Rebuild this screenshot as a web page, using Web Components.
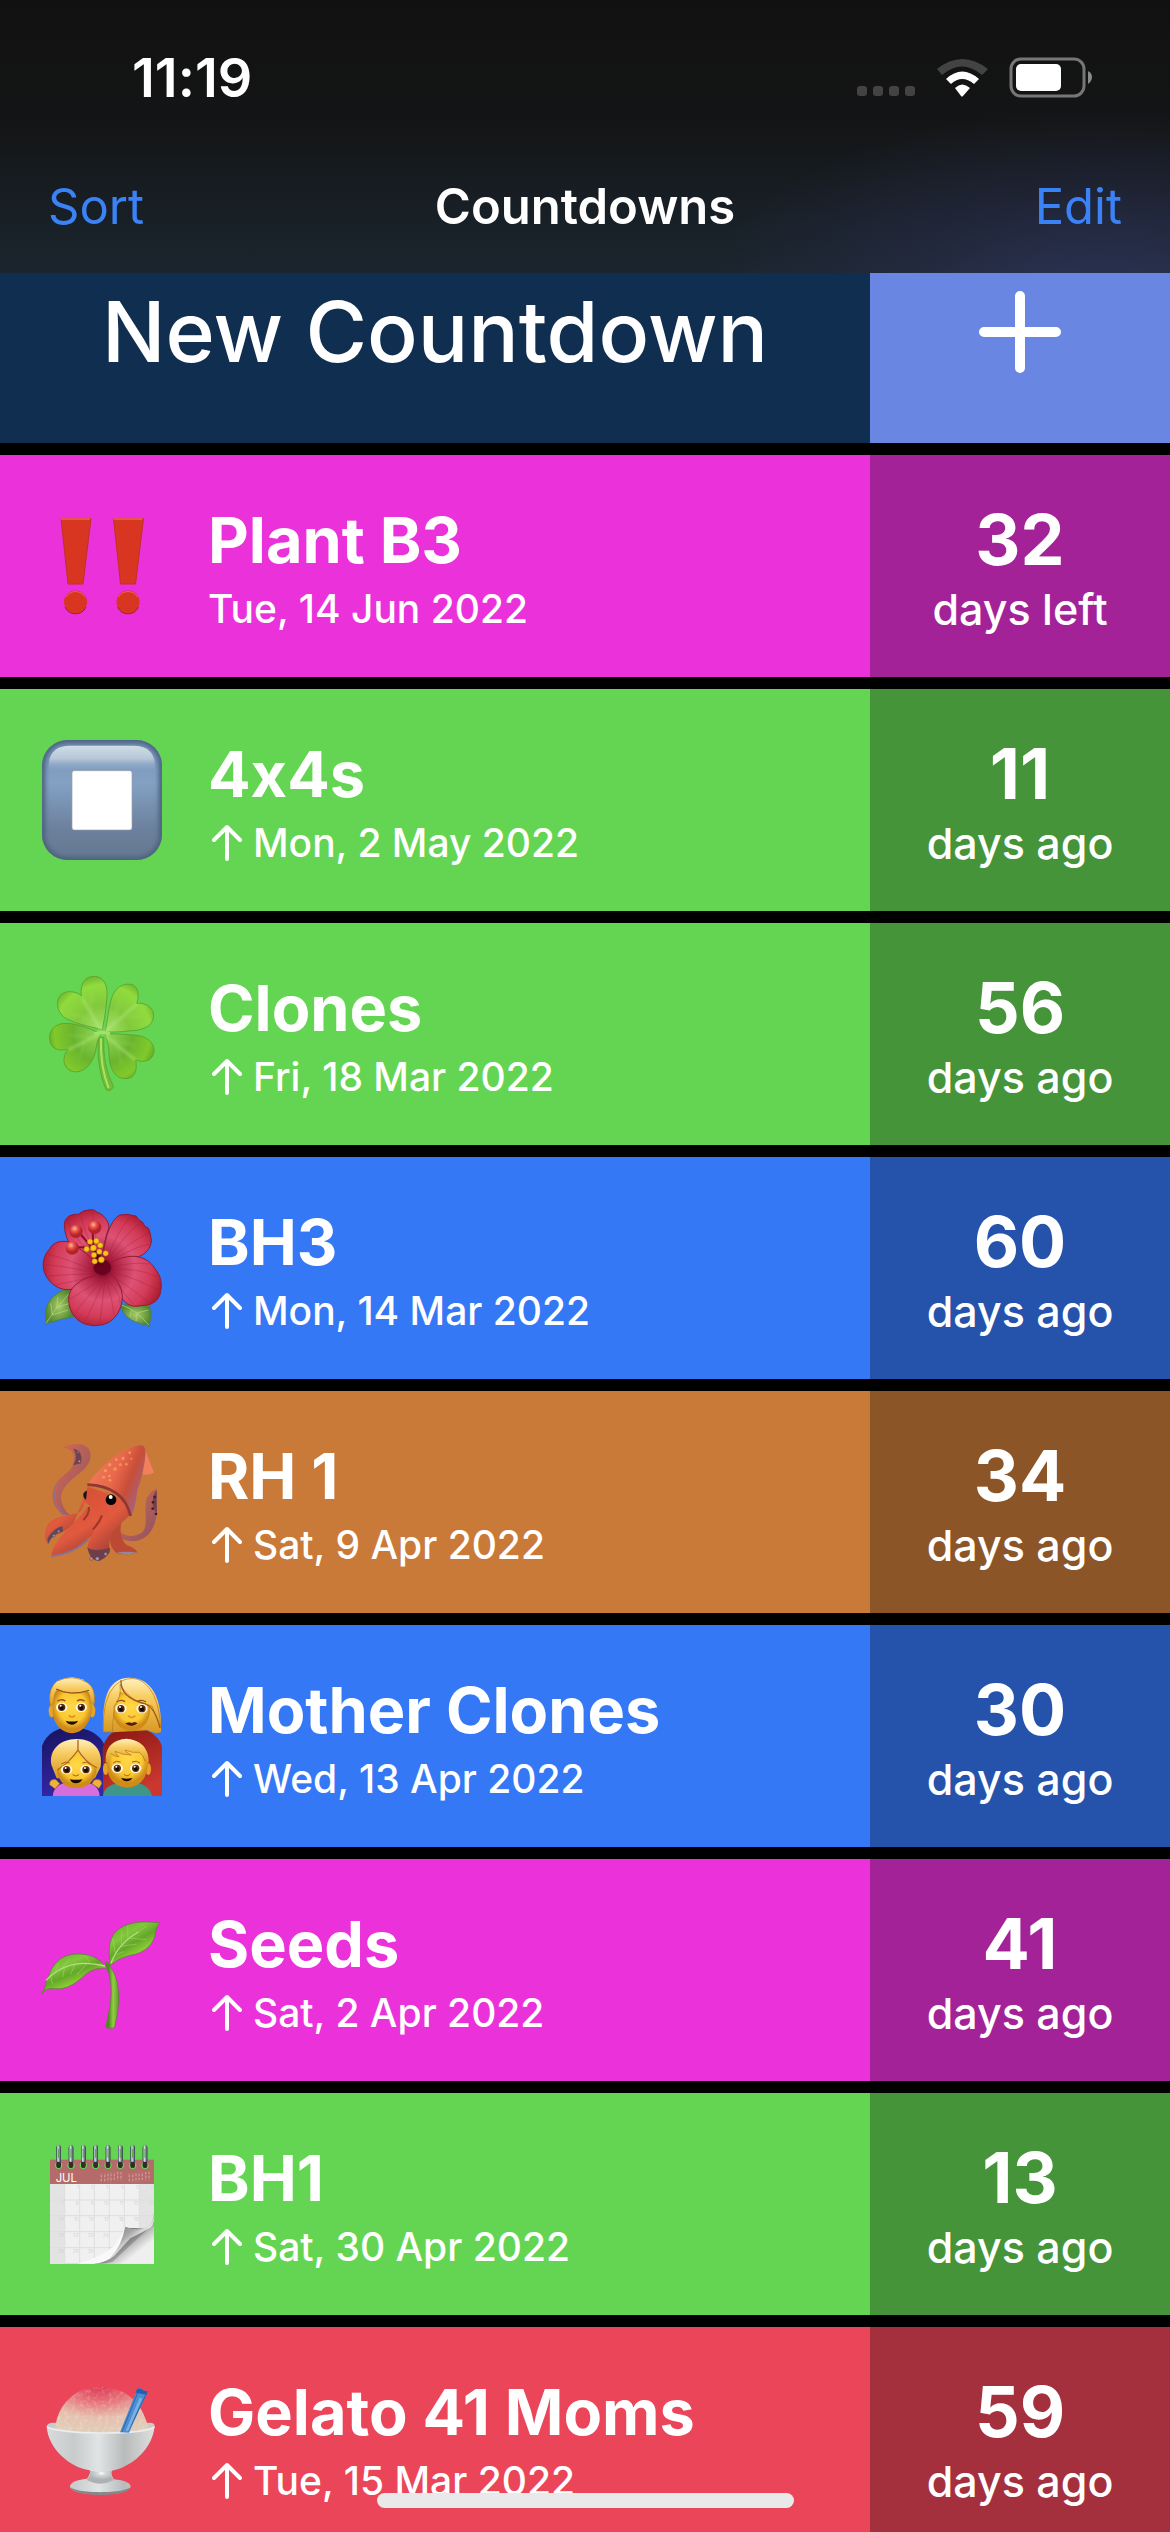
<!DOCTYPE html>
<html lang="en">
<head>
<meta charset="utf-8">
<meta name="viewport" content="width=device-width, initial-scale=1">
<title>Countdowns</title>
<style>
html, body {
	margin: 0;
	background: #000;
	color: #fff;
	font-family: Inter, "Liberation Sans", sans-serif;
	font-variant-ligatures: no-contextual;
}
</style>
</head>
<body>
<countdown-app>
	<status-bar slot="header">11:19</status-bar>
	<nav-bar slot="header">
		<span slot="left">Sort</span>
		Countdowns
		<span slot="right">Edit</span>
	</nav-bar>

	<new-countdown>New Countdown</new-countdown>
	<countdown-row color="pink" count="32" unit="days left">
		<emoji-icon slot="icon" name="bangs"></emoji-icon>Plant B3<span slot="date">Tue, 14 Jun 2022</span>
	</countdown-row>
	<countdown-row color="green" count="11" unit="days ago" past>
		<emoji-icon slot="icon" name="stop"></emoji-icon>4x4s<span slot="date">Mon, 2 May 2022</span>
	</countdown-row>
	<countdown-row color="green" count="56" unit="days ago" past>
		<emoji-icon slot="icon" name="clover"></emoji-icon>Clones<span slot="date">Fri, 18 Mar 2022</span>
	</countdown-row>
	<countdown-row color="blue" count="60" unit="days ago" past>
		<emoji-icon slot="icon" name="hibiscus"></emoji-icon>BH3<span slot="date">Mon, 14 Mar 2022</span>
	</countdown-row>
	<countdown-row color="brown" count="34" unit="days ago" past>
		<emoji-icon slot="icon" name="squid"></emoji-icon>RH 1<span slot="date">Sat, 9 Apr 2022</span>
	</countdown-row>
	<countdown-row color="blue" count="30" unit="days ago" past>
		<emoji-icon slot="icon" name="family"></emoji-icon>Mother Clones<span slot="date">Wed, 13 Apr 2022</span>
	</countdown-row>
	<countdown-row color="pink" count="41" unit="days ago" past>
		<emoji-icon slot="icon" name="seedling"></emoji-icon>Seeds<span slot="date">Sat, 2 Apr 2022</span>
	</countdown-row>
	<countdown-row color="green" count="13" unit="days ago" past>
		<emoji-icon slot="icon" name="calendar"></emoji-icon>BH1<span slot="date">Sat, 30 Apr 2022</span>
	</countdown-row>
	<countdown-row color="red" count="59" unit="days ago" past>
		<emoji-icon slot="icon" name="ice"></emoji-icon>Gelato 41 Moms<span slot="date">Tue, 15 Mar 2022</span>
	</countdown-row>
</countdown-app>

<script>
function makeTemplate(html) {
	const template = document.createElement('template');
	template.innerHTML = html;
	return template;
}

// Base class: clones the template of the subclass into its shadow root
class BaseElement extends HTMLElement {
	connectedCallback() {
		if (this.shadowRoot) {
			return;
		}
		this.attachShadow({ mode: 'open' });
		this.shadowRoot.appendChild(this.constructor.template.content.cloneNode(true));
		this.render();
	}

	render() {}
}

class CountdownApp extends BaseElement {}
CountdownApp.template = makeTemplate(`
<style>
:host {
	display: flex;
	flex-direction: column;
	height: 100vh;
	overflow: hidden;
}
header {
	flex: none;
	background:
		radial-gradient(ellipse 34% 70% at 94% 110%, rgba(54, 60, 112, .6), rgba(46, 48, 86, .35) 55%, transparent),
		linear-gradient(#111 0%, #141516 45%, #182027 80%, #1b252d 100%);
}
main {
	flex: 1;
	min-height: 0;
	overflow: hidden;
	display: flex;
	flex-direction: column;
	gap: 12px;
}
.home {
	position: fixed;
	bottom: 24px;
	left: 50%;
	width: 417px;
	height: 15px;
	margin-left: -208px;
	border-radius: 8px;
	background: #e9e9e9;
}
</style>
<header><slot name="header"></slot></header>
<main><slot></slot></main>
<div class="home"></div>
`);

class StatusBar extends BaseElement {}
StatusBar.template = makeTemplate(`
<style>
:host {
	display: flex;
	align-items: center;
	justify-content: space-between;
	box-sizing: border-box;
	height: 141px;
	padding: 30px 76px 15px 132px;
	font-size: 54px;
	font-weight: 600;
	line-height: 96px;
}
svg { display: block; }
</style>
<slot></slot>
<svg width="240" height="44" viewBox="853 56 240 44" aria-hidden="true">
	<g fill="#434344">
		<rect x="856" y="86" width="10" height="10" rx="3"/>
		<rect x="872" y="86" width="10" height="10" rx="3"/>
		<rect x="888" y="86" width="10" height="10" rx="3"/>
		<rect x="904" y="86" width="10" height="10" rx="3"/>
	</g>
	<path d="M936 69Q961 49 987 69L981 75Q961 58 941 75Z" fill="#434344"/>
	<path d="M945 79Q961 64 978 79L973 84Q961 74 950 84Z" fill="#fff"/>
	<path d="M954 88Q961 81 969 88L962 96Q961 97 960 96Z" fill="#fff"/>
	<rect x="1010" y="59" width="73" height="37" rx="10" fill="none" stroke="#767677" stroke-width="3"/>
	<rect x="1015" y="64" width="45" height="27" rx="5" fill="#fff"/>
	<path d="M1087 71Q1091 73 1091 77T1087 84Z" fill="#8a8a8b"/>
</svg>
`);

class NavBar extends BaseElement {}
NavBar.template = makeTemplate(`
<style>
:host {
	display: grid;
	grid-template-columns: 1fr auto 1fr;
	align-items: center;
	height: 132px;
	padding: 0 48px;
	font-size: 49px;
	line-height: 60px;
}
button {
	margin: 0;
	padding: 0;
	border: 0;
	background: none;
	color: #3b82f7;
	font: inherit;
	text-align: left;
}
.right { text-align: right; }
h1 {
	margin: 0;
	font-size: inherit;
	font-weight: 600;
}
</style>
<button type="button"><slot name="left"></slot></button>
<h1><slot></slot></h1>
<button type="button" class="right"><slot name="right"></slot></button>
`);

class NewCountdown extends BaseElement {}
NewCountdown.template = makeTemplate(`
<style>
:host { display: block; flex: none; }
button {
	display: flex;
	width: 100%;
	height: 170px;
	margin: 0;
	padding: 0;
	border: 0;
	background: #102e50;
	color: inherit;
	font: 500 84px/118px Inter, "Liberation Sans", sans-serif;
}
.label { flex: 1; }
.plus {
	display: flex;
	justify-content: center;
	width: 300px;
	height: 100%;
	padding-top: 17px;
	box-sizing: border-box;
	background: #6987e2;
}
</style>
<button type="button">
	<span class="label"><slot></slot></span>
	<span class="plus">
		<svg width="84" height="84" viewBox="0 0 84 84" stroke="#fff" stroke-width="10" stroke-linecap="round" aria-hidden="true">
			<path d="M42 6V78M6 42H78"/>
		</svg>
	</span>
</button>
`);

class CountdownRow extends BaseElement {
	render() {
		this.shadowRoot.querySelector('.count').textContent = this.getAttribute('count');
		this.shadowRoot.querySelector('.unit').textContent = this.getAttribute('unit');
	}
}
CountdownRow.template = makeTemplate(`
<style>
:host {
	display: flex;
	flex: none;
	height: 222px;
	background: var(--row);
	white-space: nowrap;
}
:host([color="pink"]) { --row: #eb31da; }
:host([color="green"]) { --row: #64d552; }
:host([color="blue"]) { --row: #3578f6; }
:host([color="brown"]) { --row: #c97a39; }
:host([color="red"]) { --row: #eb455a; }
.icon {
	display: flex;
	align-items: center;
	padding: 0 46px 0 42px;
}
.info, .left {
	padding-top: 46px;
	box-sizing: border-box;
}
.info { flex: 1; }
.left {
	width: 300px;
	background: rgba(0, 0, 0, .3);
	text-align: center;
}
h2, .count {
	margin: 0;
	font-size: 63px;
	font-weight: 700;
	line-height: 78px;
}
.count { font-size: 70px; }
.date, .unit {
	display: flex;
	align-items: center;
	gap: 11px;
	font-size: 39px;
	font-weight: 500;
	line-height: 60px;
}
.unit {
	justify-content: center;
	font-size: 43px;
}
.date svg { display: none; margin-left: 4px; }
:host([past]) .date svg { display: block; }
</style>
<div class="icon"><slot name="icon"></slot></div>
<div class="info">
	<h2><slot></slot></h2>
	<div class="date">
		<svg width="30" height="38" viewBox="0 0 30 38" fill="none" stroke="#fff" stroke-width="4" stroke-linecap="round" stroke-linejoin="round" aria-hidden="true">
			<path d="M15 35V3M2 16L15 3L28 16"/>
		</svg>
		<slot name="date"></slot>
	</div>
</div>
<div class="left">
	<div class="count"></div>
	<div class="unit"></div>
</div>
`);

const icons = {};

icons.bangs = `
<svg viewBox="42 506 120 120">
	<g id="b">
		<path d="M61 518.500H91L83 584H68Z" fill="#d93622" stroke="#c02f2a" stroke-width="1"/>
		<path d="M61 519H90" stroke="#f0605a" stroke-width="1.500"/>
		<circle cx="75.500" cy="602" r="11.500" fill="#d93622"/>
		<path d="M65 607A11.500 11.500 0 0 0 86 607" stroke="#a02320" fill="none"/>
		<path d="M66 597A11 11 0 0 1 85 597" stroke="#f0605a" fill="none"/>
	</g>
	<use href="#b" x="52.500"/>
</svg>`;

icons.stop = `
<svg viewBox="66 90 360 360">
	<defs>
		<linearGradient id="g" x2="0" y2="1"><stop stop-color="#7391b5"/><stop offset=".35" stop-color="#84a1c4"/><stop offset=".75" stop-color="#6b809c"/><stop offset="1" stop-color="#667890"/></linearGradient>
		<linearGradient id="s" x2="0" y2="1"><stop stop-color="#d0dde8"/><stop offset=".5" stop-color="#b7c7d8"/><stop offset="1" stop-color="#84a1c4" stop-opacity="0"/></linearGradient>
		<filter id="f"><feGaussianBlur stdDeviation="6"/></filter>
		<clipPath id="c"><rect x="66" y="90" width="360" height="360" rx="76"/></clipPath>
	</defs>
	<g clip-path="url(#c)">
		<rect x="66" y="90" width="360" height="360" fill="url(#g)"/>
		<rect x="66" y="90" width="360" height="360" rx="76" fill="none" stroke="#4b637f" stroke-width="20" filter="url(#f)"/>
	</g>
	<path d="M86 185V170Q86 107 150 107H340Q405 107 405 170V185Z" fill="url(#s)"/>
	<rect x="156" y="182" width="180" height="178" rx="7" fill="#fff" stroke="#9a9fa8" stroke-width="2"/>
</svg>`;

icons.clover = `
<svg viewBox="66 72 360 360">
	<defs>
		<radialGradient id="a" gradientUnits="userSpaceOnUse" cx="248" cy="248" r="180"><stop stop-color="#a9e56e"/><stop offset=".45" stop-color="#82c93c"/><stop offset=".8" stop-color="#90dc3e"/><stop offset="1" stop-color="#64ab26"/></radialGradient>
		<radialGradient id="b" gradientUnits="userSpaceOnUse" cx="248" cy="248" r="180"><stop stop-color="#98dd5c"/><stop offset=".5" stop-color="#6ab42e"/><stop offset=".8" stop-color="#80ca2b"/><stop offset="1" stop-color="#53981d"/></radialGradient>
		<filter id="f"><feGaussianBlur stdDeviation="4"/></filter>
	</defs>
	<path d="M235 262C231 320 239 379 259 420Q270 427 281 410C257 362 249 315 252 262Z" fill="#71bd38" stroke="#559a2e" stroke-width="2"/>
	<path d="M243 265C241 325 250 375 266 414" stroke="#a6e564" stroke-width="6" fill="none"/>
	<g stroke="#5e9e32" stroke-width="2.500">
		<path d="M244 238C226 234 170 222 150 211C112 199 103 153 122 135C139 119 169 124 184 137C180 101 195 78 224 79C256 81 265 112 260 151C257 190 251 216 247 241Z" fill="url(#a)"/>
		<path d="M256 243C263 217 264 172 277 138C288 109 319 95 341 106C357 116 357 142 350 160C378 157 401 172 401 198C399 233 360 242 325 243C300 247 277 245 256 247Z" fill="url(#a)"/>
		<path d="M236 248C202 233 167 219 135 220C98 222 84 247 90 275C98 303 124 302 144 298C126 319 127 352 153 363C187 375 219 342 226 305C231 285 231 267 242 255Z" fill="url(#b)"/>
		<path d="M255 252C284 251 324 253 350 256C387 260 408 286 401 310C395 335 368 338 347 330C353 361 344 387 316 386C285 386 267 354 267 315C267 292 263 271 255 256Z" fill="url(#b)"/>
	</g>
	<g stroke="#b9ec85" fill="none" filter="url(#f)" stroke-width="5" opacity=".75">
		<path d="M246 246L187 145M252 247L352 161M240 252L144 300M255 256L346 330"/>
		<path d="M228 215L150 190M214 188V130M277 222L300 150M300 203L365 200M215 263L145 255M195 273L180 320M274 272L345 285M290 284L305 345" stroke-width="4" opacity=".4"/>
	</g>
	<path d="M224 252Q244 243 270 252" stroke="#a4e264" stroke-width="10" fill="none"/>
</svg>`;

icons.hibiscus = `
<svg viewBox="66 54 360 360">
	<defs>
		<radialGradient id="p" gradientUnits="userSpaceOnUse" cx="248" cy="235" r="195"><stop stop-color="#500015"/><stop offset=".18" stop-color="#a91c3c"/><stop offset=".5" stop-color="#dd5275"/><stop offset=".75" stop-color="#d33b58"/><stop offset=".95" stop-color="#ad1d30"/></radialGradient>
		<radialGradient id="l"><stop stop-color="#a5cc68"/><stop offset="1" stop-color="#54882f"/></radialGradient>
		<radialGradient id="r" cx=".4" cy=".3"><stop stop-color="#ffb4a0"/><stop offset=".5" stop-color="#e75043"/><stop offset="1" stop-color="#b4232b"/></radialGradient>
	</defs>
	<g fill="url(#l)" stroke="#4b7a2c" stroke-width="2">
		<path d="M150 295C115 302 84 324 78 360C75 378 80 388 76 404Q86 393 98 397Q120 386 158 382Z"/>
		<path d="M302 345C305 372 330 392 352 397Q366 407 376 402L388 410Q386 397 393 388Q394 362 387 340Z"/>
	</g>
	<path d="M78 400Q105 355 148 310M97 373L92 340M110 355L113 322M96 375L145 360M113 352L149 340M305 345Q350 360 386 405M335 360L330 380M351 370L348 394M351 369L385 360" stroke="#bad984" stroke-width="2" fill="none"/>
	<g fill="url(#p)" stroke="#8f1c36" stroke-width="3">
		<path d="M225 225C180 210 134 166 133 102C135 80 155 71 175 73Q188 60 209 59Q223 57 232 67C252 74 266 93 267 112Q250 155 246 220Z"/>
		<path d="M248 225C248 160 270 88 300 75Q321 70 348 78Q356 92 368 97Q371 110 386 115Q392 132 394 150C395 177 370 201 338 204Q285 210 260 230Z"/>
		<path d="M235 236C221 199 177 177 148 156C122 150 98 157 89 177C76 190 67 211 70 234C75 269 108 300 144 299C191 294 225 276 238 245Z"/>
		<path d="M260 235C274 207 317 198 345 199C382 203 397 224 406 237C421 256 427 276 422 305C417 335 392 347 363 347C333 355 309 339 299 310Q290 285 265 255Z"/>
		<path d="M250 250C213 257 157 274 147 316C141 356 163 391 197 403Q222 411 248 404C292 393 311 345 306 310C300 276 278 253 268 248Z"/>
	</g>
	<g stroke="#9e1938" stroke-width="2" opacity=".5" fill="none">
		<path d="M225 243Q150 210 83 192M225 248Q140 230 78 224M225 252Q150 252 84 258M226 256Q165 275 105 285M240 270Q180 310 151 326M245 272Q195 330 165 370M250 274Q217 350 196 394M254 274Q248 340 239 398M260 272Q277 330 283 376M264 270Q300 305 301 340"/>
		<path d="M275 234Q330 214 388 222M276 240Q345 230 411 260M276 247Q350 264 416 302M275 255Q340 300 389 339M272 258Q325 325 341 344M261 205Q295 120 330 82M265 208Q315 132 360 100M269 211Q330 155 386 129M273 214Q335 174 388 162M226 205Q170 155 144 96M232 201Q195 130 182 80M236 198Q223 120 218 67"/>
	</g>
	<ellipse cx="247" cy="232" rx="26" ry="23" fill="#69021e"/>
	<path d="M240 226L220 166L218 125M226 185L181 132M223 174L165 171" stroke="#8a0c26" stroke-width="6" fill="none"/>
	<path d="M240 228L228 182" stroke="#650016" stroke-width="20"/>
	<g fill="url(#r)"><circle cx="168" cy="124" r="20"/><circle cx="224" cy="112" r="20"/><circle cx="157" cy="174" r="20"/></g>
	<g fill="#f7c916" stroke="#b37c0c" stroke-width="1.500">
		<circle cx="210" cy="155" r="8"/><circle cx="229" cy="153" r="8"/><circle cx="241" cy="166" r="8"/><circle cx="200" cy="177" r="8"/><circle cx="220" cy="174" r="9"/><circle cx="238" cy="185" r="8"/><circle cx="257" cy="190" r="8"/><circle cx="222" cy="195" r="8"/><circle cx="224" cy="214" r="8"/><circle cx="244" cy="209" r="9"/>
	</g>
</svg>`;

icons.squid = `
<svg viewBox="66 66 360 360">
	<defs>
		<linearGradient id="m" x1="0" y1="0" x2="1" y2=".5"><stop stop-color="#f38260"/><stop offset=".55" stop-color="#e8674b"/><stop offset=".78" stop-color="#c84e38"/><stop offset="1" stop-color="#a8617a"/></linearGradient>
		<linearGradient id="h" x2=".6" y2="1"><stop stop-color="#d74f34"/><stop offset=".6" stop-color="#e1593e"/><stop offset="1" stop-color="#a13f37"/></linearGradient>
		<linearGradient id="t" x2="1" y2="1"><stop stop-color="#d76b51"/><stop offset="1" stop-color="#8e5362"/></linearGradient>
	</defs>
	<path d="M126 83Q160 69 184 73C218 82 222 120 190 150C158 177 116 204 125 245Q131 270 150 286L128 284C91 253 89 216 113 183C137 158 169 147 161 105Q156 84 126 83Z" fill="url(#t)"/>
	<path d="M160 86Q190 91 183 130L159 136Q176 110 160 86Z" fill="#714352"/>
	<path d="M116 188Q94 218 108 250T140 285" fill="none" stroke="#8d7697" stroke-width="3"/>
	<path d="M298 335Q332 358 362 340C391 325 367 256 382 231Q394 212 410 206L411 270C409 310 395 351 352 362Q318 368 288 349Z" fill="url(#t)"/>
	<path d="M410 210Q395 229 399 257L410 285Z" fill="#70404e"/>
	<g fill="#3d2023"><circle cx="404" cy="231" r="4"/><circle cx="399" cy="247" r="4"/><circle cx="398" cy="266" r="4"/><circle cx="408" cy="282" r="4"/></g>
	<path d="M272 310L308 290Q291 351 320 376Q345 383 352 397Q326 407 291 400C260 375 274 350 270 324Z" fill="#bb4934"/>
	<path d="M290 396Q315 394 350 396L329 403Q308 405 290 396Z" fill="#9188a4"/>
	<path d="M204 198C198 230 197 263 178 277C145 290 88 285 77 329Q71 356 84 372Q90 353 109 344Q140 335 162 308Z" fill="url(#h)"/>
	<path d="M84 372Q97 342 129 334L127 318Q98 326 83 355Z" fill="#5e485a"/>
	<path d="M202 260C174 309 96 356 94 409C139 406 173 390 207 354Q245 326 250 286Z" fill="url(#h)"/>
	<path d="M94 409Q170 397 205 356" stroke="#8a708f" stroke-width="6" fill="none"/>
	<path d="M230 281C239 326 200 355 203 387Q220 405 269 389Q262 346 292 320L329 286Q327 253 291 230L203 200L193 242Z" fill="url(#h)"/>
	<path d="M202 382Q217 397 270 384Q273 406 238 423Q210 424 202 382Z" fill="#6f3e4c"/>
	<g fill="#aa90a5" stroke="#302329" stroke-width="1"><circle cx="214" cy="416" r="5"/><circle cx="232" cy="416" r="6"/><circle cx="257" cy="402" r="5"/><circle cx="116" cy="334" r="4"/><circle cx="102" cy="347" r="4"/><circle cx="174" cy="97" r="3"/><circle cx="178" cy="124" r="4"/></g>
	<path d="M256 135Q268 112 299 101L328 92L287 117Z" fill="#e66a4f"/>
	<path d="M376 90Q391 130 402 158Q383 167 367 163Z" fill="#f2805f"/>
	<path d="M202 194Q221 164 257 132Q310 84 360 75Q376 75 377 97Q372 160 352 210Q346 270 332 290Q323 246 273 215Q242 197 202 199Z" fill="url(#m)"/>
	<path d="M202 194Q310 198 332 288" fill="none" stroke="#903633" stroke-width="8"/>
	<g fill="#f9a563" opacity=".75"><circle cx="256" cy="152" r="5"/><circle cx="269" cy="134" r="5"/><circle cx="289" cy="119" r="4"/><circle cx="309" cy="115" r="5"/><circle cx="329" cy="98" r="4"/><circle cx="285" cy="147" r="5"/><circle cx="268" cy="168" r="4"/><circle cx="301" cy="134" r="4"/><circle cx="251" cy="172" r="4"/><circle cx="319" cy="133" r="4"/><circle cx="270" cy="181" r="4"/><circle cx="334" cy="116" r="3"/></g>
	<path d="M246 286Q239 307 219 328M190 300Q208 283 207 261" stroke="#9e3528" stroke-width="6" fill="none"/>
	<path d="M201 212Q188 216 190 228Q191 237 198 239Z" fill="#10191d"/>
	<circle cx="273" cy="239" r="16" fill="#020303"/><circle cx="272" cy="231" r="6" fill="#fff"/>
</svg>`;

icons.family = `
<svg viewBox="66 48 360 360">
	<defs>
		<radialGradient id="s" cy=".4"><stop stop-color="#ffd84a"/><stop offset=".7" stop-color="#fac832"/><stop offset="1" stop-color="#cf8a18"/></radialGradient>
		<linearGradient id="h" x2="0" y2="1"><stop stop-color="#fff0c0"/><stop offset=".35" stop-color="#f8cd62"/><stop offset="1" stop-color="#d79821"/></linearGradient>
		<linearGradient id="bl" x2=".3" y2="1"><stop stop-color="#18135d"/><stop offset="1" stop-color="#3327aa"/></linearGradient>
		<linearGradient id="rd" x2=".4" y2="1"><stop stop-color="#84160f"/><stop offset="1" stop-color="#c93730"/></linearGradient>
		<g id="eye"><ellipse rx="17" ry="14" fill="#fffbe2"/><circle r="11" fill="#5a2c0c"/><circle cy="2" r="6" fill="#160905"/><circle cx="-3" cy="-5" r="3" fill="#fff"/></g>
	</defs>
	<path d="M66 408V257C81 218 116 201 156 202C205 204 253 224 260 280V408Z" fill="url(#bl)"/>
	<path d="M248 265C259 219 294 201 337 202C385 204 421 231 426 263V408H250Z" fill="url(#rd)"/>
	<path d="M90 130Q88 56 155 52Q223 56 223 128L218 145L93 143Z" fill="url(#h)"/>
	<ellipse cx="95" cy="153" rx="9" ry="19" fill="#e5a429"/><ellipse cx="217" cy="153" rx="9" ry="19" fill="#e5a429"/>
	<path d="M98 115Q104 93 116 88Q155 105 204 94Q216 102 215 157C207 196 184 219 156 220C126 219 101 194 98 157Z" fill="url(#s)"/>
	<path d="M89 121Q87 85 110 64Q158 41 202 68Q229 85 222 134L211 124Q211 106 203 94Q151 109 113 88Q101 99 101 127L92 139Z" fill="url(#h)" stroke="#bd7c1b" stroke-width="2"/>
	<path d="M108 87Q152 109 207 91" fill="none" stroke="#8c4c15" stroke-width="3"/>
	<path d="M249 215C249 151 248 63 318 54C387 47 429 105 423 216Q406 224 383 211L277 217Z" fill="url(#h)"/>
	<path d="M277 150Q283 108 298 95Q345 105 380 127Q395 144 389 164C382 193 361 213 334 214C301 211 280 188 277 150Z" fill="url(#s)"/>
	<path d="M286 75Q319 48 354 58Q415 83 422 202Q407 170 396 138Q330 126 300 74Q305 110 283 138Q280 170 277 216H250Q246 115 286 75Z" fill="url(#h)" stroke="#b67516" stroke-width="2"/>
	<path d="M303 61Q300 114 377 132Q405 143 420 204" fill="none" stroke="#a25c14" stroke-width="4"/>
	<use href="#eye" x="125" y="142"/><use href="#eye" x="184" y="142"/><use href="#eye" x="303" y="146"/><use href="#eye" x="366" y="146"/>
	<path d="M112 124Q124 115 136 123M171 123Q184 115 194 124M290 126Q302 117 315 125M352 125Q365 117 378 126" stroke="#91521a" stroke-width="4" fill="none"/>
	<path d="M146 166Q156 176 166 166M324 167Q335 178 346 167" fill="none" stroke="#dc962b" stroke-width="5"/>
	<path d="M137 182Q155 187 174 182Q169 193 155 194Q142 192 137 182Z" fill="#230d08"/><path d="M315 190L328 187L335 189L344 186L353 190Q334 206 315 190Z" fill="#542013"/>
	<path d="M98 408Q102 373 145 367H197Q237 374 239 408Z" fill="#d66edd"/>
	<path d="M249 408Q252 377 295 369H353Q388 377 397 408Z" fill="#3e9688"/>
	<path d="M108 359Q88 356 89 374L105 386L119 371ZM223 360Q244 355 245 371L237 385L216 371Z" fill="#efb23f" stroke="#b57116" stroke-width="2"/>
	<path d="M94 314C87 271 119 237 170 237C219 236 250 270 242 320L225 355H110Z" fill="url(#h)"/>
	<path d="M110 329Q147 304 171 272Q189 300 229 326Q229 356 203 376Q171 393 137 377Q113 360 110 329Z" fill="url(#s)"/>
	<path d="M174 239V270Q150 306 112 330M174 270Q195 306 231 324" fill="none" stroke="#aa681c" stroke-width="4"/>
	<ellipse cx="257" cy="327" rx="8" ry="18" fill="#e5a429"/><ellipse cx="385" cy="327" rx="8" ry="18" fill="#e5a429"/>
	<path d="M260 309Q253 244 318 237Q383 242 386 302L378 342Q365 380 322 383Q278 380 265 342Z" fill="url(#s)"/>
	<path d="M257 307Q253 242 319 236Q385 242 386 307L375 305Q369 280 358 277Q337 280 314 268Q323 282 334 285Q307 283 284 274Q293 287 297 291Q279 287 272 279L266 309Z" fill="url(#h)"/>
	<path d="M272 279Q278 288 297 290Q288 282 285 274Q309 286 334 285Q318 279 315 270Q339 280 358 277Q371 286 375 304" fill="none" stroke="#b46c19" stroke-width="2"/>
	<use href="#eye" x="140" y="329"/><use href="#eye" x="198" y="329"/><use href="#eye" x="292" y="325"/><use href="#eye" x="347" y="325"/>
	<path d="M124 312Q136 302 149 309M187 309Q201 302 211 313M279 309Q289 300 302 306M336 306Q350 300 360 309M158 344Q167 352 177 344M311 342Q321 353 331 342" stroke="#a96016" stroke-width="3" fill="none"/>
	<path d="M150 358Q167 361 187 358Q182 370 167 370Q154 370 150 358ZM304 354Q320 358 337 354Q333 363 320 364Q307 363 304 354Z" fill="#170906"/>
</svg>`;

icons.seedling = `
<svg viewBox="66 30 360 360">
	<defs>
		<linearGradient id="a" x2=".7" y2="1"><stop stop-color="#68a42c"/><stop offset=".35" stop-color="#82c83d"/><stop offset=".55" stop-color="#65a729"/><stop offset=".75" stop-color="#8ed235"/><stop offset="1" stop-color="#4b8823"/></linearGradient>
		<linearGradient id="b"><stop stop-color="#5e9728"/><stop offset=".25" stop-color="#4e8724"/><stop offset=".6" stop-color="#91cf3e"/><stop offset="1" stop-color="#5f9a2d"/></linearGradient>
	</defs>
	<path d="M255 187Q261 180 266 193C309 248 298 327 283 383Q270 389 257 381C268 333 285 268 262 207Z" fill="url(#b)" stroke="#4e822a" stroke-width="2"/>
	<g fill="url(#a)" stroke="#4a852b" stroke-width="2">
		<path d="M66 280C77 268 75 249 84 233C98 189 123 169 153 164C191 157 230 167 252 195L262 205C227 201 206 214 188 231C164 252 138 269 107 266Q78 262 66 280Z"/>
		<path d="M271 197C265 158 265 119 287 95C318 65 364 62 421 69Q408 81 407 94C403 132 378 154 344 163C316 169 291 177 271 197Z"/>
	</g>
	<path d="M78 241Q145 170 255 198M273 190Q295 130 355 96" fill="none" stroke="#b7df83" stroke-width="4"/>
	<path d="M105 218L115 190M127 204L148 177M91 226L98 253M134 201L128 232M165 192L152 223M205 187L170 225M210 186L197 170M287 164L278 117M304 137L305 91M324 118L323 79M304 139L350 132M330 114L378 119M345 102L379 79M290 164L310 155" fill="none" stroke="#a6db66" stroke-width="2" opacity=".8"/>
</svg>`;

icons.calendar = `
<svg viewBox="66 72 360 360">
	<defs>
		<linearGradient id="c" x1="0" y1="0" x2="1" y2="1"><stop offset=".3" stop-color="#777"/><stop offset=".5" stop-color="#aaa"/><stop offset=".65" stop-color="#fff"/></linearGradient>
		<linearGradient id="m"><stop stop-color="#374657"/><stop offset=".35" stop-color="#dce7ef"/><stop offset=".65" stop-color="#8a949e"/><stop offset="1" stop-color="#2c3641"/></linearGradient>
		<linearGradient id="k" x1="0" y1="0" x2="1" y2="1"><stop offset=".2" stop-color="#f2f2f2"/><stop offset=".48" stop-color="#646464"/><stop offset=".62" stop-color="#c2c2c2"/><stop offset=".75" stop-color="#efefef"/></linearGradient>
	</defs>
	<path d="M90 118H402V431H90Z" fill="#f0f0f0"/>
	<path d="M90 192H134V431H90ZM358 192H402V330H358Z" fill="#e3e3e3"/>
	<path d="M90 118H402V192H90Z" fill="#b56b69"/>
	<path d="M90 240H402M90 287H402M90 335H402M90 383H402M134 193V431M179 193V431M223 193V431M268 193V431M313 193V431M358 193V431" stroke="#dedede" stroke-width="3"/>
	<text x="107" y="186" fill="#fff" font-size="34" font-family="Inter, sans-serif">JUL</text>
	<g id="days" fill="#d4d4d4" font-size="14" font-family="Inter, sans-serif" text-anchor="end"></g>
	<path d="M244 161V186M254 161V186M264 158V186M273 158V186M283 158V180M293 156V181M303 156V181M328 161V186M338 161V186M348 158V186M357 158V186M367 158V181M377 156V181M387 156V181" stroke="#d6a6a5" stroke-width="4" stroke-dasharray="2 2"/>
	<path d="M220 431H402V290Q400 318 380 326L318 323Q310 350 297 386Q282 418 220 431Z" fill="url(#k)"/>
	<path d="M402 310L278 425Q252 432 224 429Q277 416 297 384Q314 354 316 322Q349 336 379 325Q402 311 402 282Z" fill="#777" opacity=".5"/>
	<path d="M222 429Q260 411 285 382Q307 351 316 320Q345 332 374 325Q402 310 402 278Q407 308 391 323Q365 337 331 355L283 407Q260 428 222 429Z" fill="url(#c)"/>
	<path d="M172 431Q247 409 280 380Q307 349 316 315Q307 377 270 414Q251 430 220 431Z" fill="#f9f9f9"/>
	<g id="rings"></g>
</svg>`;

icons.ice = `
<svg viewBox="66 54 360 360">
	<defs>
		<radialGradient id="i" cx=".48" cy="0" r="1"><stop stop-color="#dc3654"/><stop offset=".3" stop-color="#e66f78"/><stop offset=".62" stop-color="#e6bfae"/><stop offset="1" stop-color="#dfd0bb"/></radialGradient>
		<linearGradient id="w"><stop stop-color="#d9dcdc"/><stop offset=".25" stop-color="#c8cbcb"/><stop offset=".48" stop-color="#e1e4e4"/><stop offset=".72" stop-color="#b8bbbb"/><stop offset="1" stop-color="#dfdfdf"/></linearGradient>
		<radialGradient id="b" cx=".55" cy=".2"><stop stop-color="#fff"/><stop offset=".3" stop-color="#d7d9d9"/><stop offset="1" stop-color="#aeb1b1"/></radialGradient>
		<filter id="n" x="0" y="0" width="1" height="1"><feTurbulence type="fractalNoise" baseFrequency=".09" numOctaves="3" seed="4"/><feColorMatrix values="0 0 0 0 1  0 0 0 0 .95  0 0 0 0 .88  0 0 0 1.800 -.8"/></filter>
		<clipPath id="c"><path d="M103 220Q110 127 184 91Q250 68 313 98Q373 132 388 220Z"/></clipPath>
	</defs>
	<path d="M80 199Q83 187 101 188H388Q404 188 404 198L391 225H95Z" fill="#c9cbcb"/>
	<g clip-path="url(#c)"><path d="M98 78H393V230H98Z" fill="url(#i)"/><path d="M98 78H393V230H98Z" filter="url(#n)" opacity=".35"/></g>
	<path d="M80 199C120 226 364 228 404 198C398 267 335 321 276 332Q270 337 281 358Q331 363 332 380C326 410 154 411 150 380Q150 361 201 356Q214 338 209 331C151 323 84 267 80 199Z" fill="url(#w)"/>
	<path d="M209 332Q243 340 276 332Q270 344 281 361Q262 371 241 371Q220 371 200 360Q215 341 209 332Z" fill="url(#b)"/>
	<path d="M150 379C156 402 324 403 332 379Q329 403 242 405Q156 404 150 379Z" fill="#858888"/>
	<path d="M81 201C120 223 363 227 403 201" fill="none" stroke="#eceded" stroke-width="5"/>
	<path d="M351 89Q357 80 365 88Q371 94 383 94L327 218L300 217Z" fill="#4b8fd2"/>
	<path d="M356 91L306 215M381 97L324 216" stroke="#2e65ac" stroke-width="3"/>
	<path d="M363 114L321 213" stroke="#79b2e2" stroke-width="8"/>
	<path d="M350 89Q357 82 365 88Q371 94 383 94L378 104L347 98Z" fill="#235fb4"/>
</svg>`;

class EmojiIcon extends BaseElement {
	render() {
		const name = this.getAttribute('name');
		const box = document.createElement('div');
		box.innerHTML = icons[name];
		this.shadowRoot.appendChild(box);

		if (name === 'calendar') {
			this.drawCalendar();
		}
	}

	drawCalendar() {
		let days = '';
		for (let day = 1; day <= 30; day++) {
			// the turned page covers the last days
			if (day === 20 || (day > 24 && day < 28)) {
				continue;
			}
			days += `<text x="${131 + (day % 7) * 45}" y="${208 + Math.floor(day / 7) * 48}">${day}</text>`;
		}
		this.shadowRoot.querySelector('#days').innerHTML = days;

		let rings = '';
		for (let i = 0; i < 8; i++) {
			const x = 116 + i * 37;
			rings += `<circle cx="${x}" cy="136" r="11" fill="#64d552"/>
				<path d="M${x} 82V137" stroke="#313b45" stroke-width="13" stroke-linecap="round"/>
				<rect x="${x - 7}" y="76" width="14" height="50" rx="7" fill="url(#m)"/>
				<path d="M${x} 88V112" stroke="#64a65c" stroke-width="4" stroke-linecap="round"/>
				<ellipse cx="${x}" cy="135" rx="7" ry="9" fill="#342b2b"/>`;
		}
		this.shadowRoot.querySelector('#rings').innerHTML = rings;
	}
}
EmojiIcon.template = makeTemplate(`
<style>
:host {
	display: block;
	width: 120px;
	height: 120px;
}
svg { display: block; width: 120px; height: 120px; overflow: visible; }
</style>
`);

window.customElements.define('countdown-app', CountdownApp);
window.customElements.define('status-bar', StatusBar);
window.customElements.define('nav-bar', NavBar);
window.customElements.define('new-countdown', NewCountdown);
window.customElements.define('countdown-row', CountdownRow);
window.customElements.define('emoji-icon', EmojiIcon);
</script>
</body>
</html>
